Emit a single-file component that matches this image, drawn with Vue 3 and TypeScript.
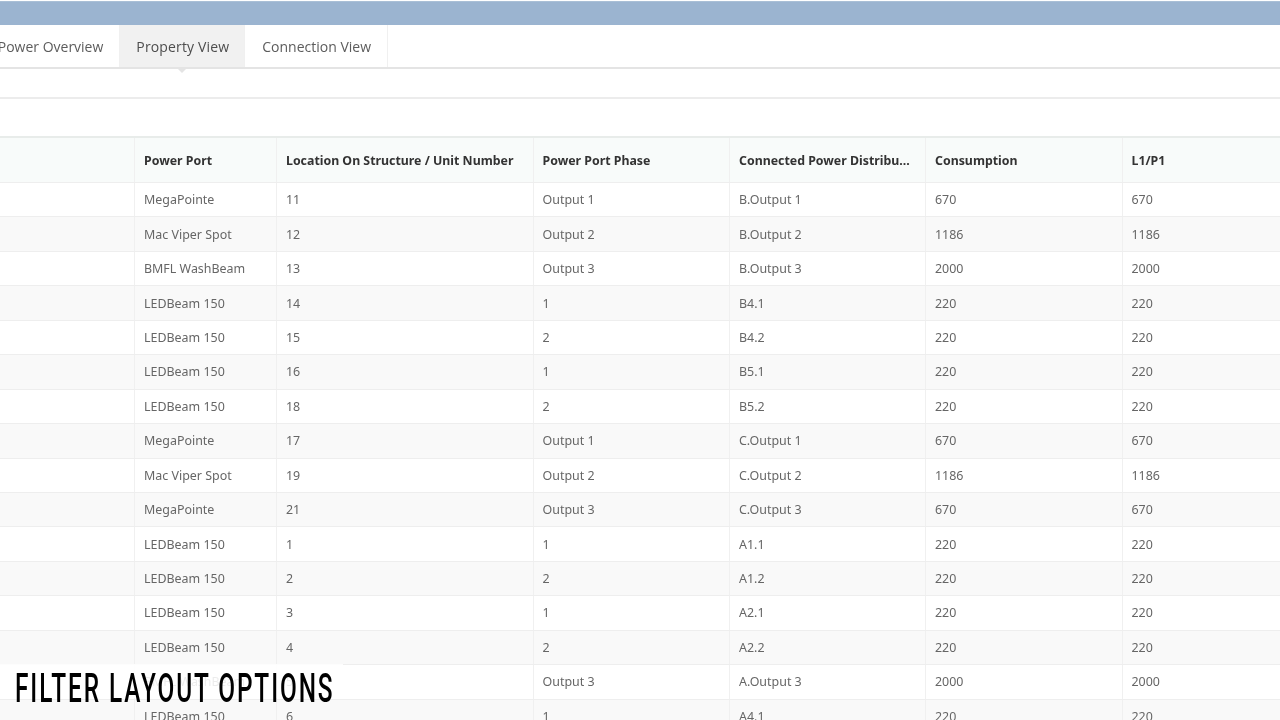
<script setup lang="ts">
interface Row {
  port: string
  unit: string
  phase: string
  dist: string
  power: string
}

const tabs = ['Power Overview', 'Property View', 'Connection View']

const headers = [
  '',
  'Power Port',
  'Location On Structure / Unit Number',
  'Power Port Phase',
  'Connected Power Distribu...',
  'Consumption',
  'L1/P1',
]

const rows: Row[] = [
  { port: 'MegaPointe', unit: '11', phase: 'Output 1', dist: 'B.Output 1', power: '670' },
  { port: 'Mac Viper Spot', unit: '12', phase: 'Output 2', dist: 'B.Output 2', power: '1186' },
  { port: 'BMFL WashBeam', unit: '13', phase: 'Output 3', dist: 'B.Output 3', power: '2000' },
  { port: 'LEDBeam 150', unit: '14', phase: '1', dist: 'B4.1', power: '220' },
  { port: 'LEDBeam 150', unit: '15', phase: '2', dist: 'B4.2', power: '220' },
  { port: 'LEDBeam 150', unit: '16', phase: '1', dist: 'B5.1', power: '220' },
  { port: 'LEDBeam 150', unit: '18', phase: '2', dist: 'B5.2', power: '220' },
  { port: 'MegaPointe', unit: '17', phase: 'Output 1', dist: 'C.Output 1', power: '670' },
  { port: 'Mac Viper Spot', unit: '19', phase: 'Output 2', dist: 'C.Output 2', power: '1186' },
  { port: 'MegaPointe', unit: '21', phase: 'Output 3', dist: 'C.Output 3', power: '670' },
  { port: 'LEDBeam 150', unit: '1', phase: '1', dist: 'A1.1', power: '220' },
  { port: 'LEDBeam 150', unit: '2', phase: '2', dist: 'A1.2', power: '220' },
  { port: 'LEDBeam 150', unit: '3', phase: '1', dist: 'A2.1', power: '220' },
  { port: 'LEDBeam 150', unit: '4', phase: '2', dist: 'A2.2', power: '220' },
  { port: 'BMFL WashBeam', unit: '5', phase: 'Output 3', dist: 'A.Output 3', power: '2000' },
  { port: 'LEDBeam 150', unit: '6', phase: '1', dist: 'A4.1', power: '220' },
]
</script>

<template>
  <div class="page">
    <div class="topbar" />

    <div class="tabbar">
      <div class="tabs">
        <div
          v-for="tab in tabs"
          :key="tab"
          class="tab"
          :class="{ active: tab === 'Property View' }"
        >
          {{ tab }}
        </div>
      </div>
    </div>

    <div class="filter-row" />
    <div class="spacer-row" />

    <div class="grid">
      <div class="row head">
        <div v-for="(h, i) in headers" :key="i" class="cell">{{ h }}</div>
      </div>
      <div v-for="(r, i) in rows" :key="i" class="row body-row">
        <div class="cell" />
        <div class="cell">{{ r.port }}</div>
        <div class="cell">{{ r.unit }}</div>
        <div class="cell">{{ r.phase }}</div>
        <div class="cell">{{ r.dist }}</div>
        <div class="cell">{{ r.power }}</div>
        <div class="cell">{{ r.power }}</div>
      </div>
    </div>

    <div class="caption">
      <span>FILTER LAYOUT OPTIONS</span>
    </div>
  </div>
</template>

<style>
html,
body {
  margin: 0;
  overflow: hidden;
  background: #fff;
}
</style>

<style scoped>
.page {
  position: relative;
  width: 1280px;
  height: 720px;
  overflow: hidden;
  background: #fff;
  font-family: 'Noto Sans', 'Open Sans', sans-serif;
  color: #666;
  filter: blur(0.35px);
}

.topbar {
  height: 24px;
  margin-top: 1px;
  background: #9bb4d0;
  border-top: 1px solid #a9bfd6;
  box-sizing: border-box;
}

.tabbar {
  height: 44px;
  box-sizing: border-box;
  border-bottom: 2px solid #e4e4e4;
}

.tabs {
  display: flex;
  justify-content: flex-end;
  width: 388px;
  height: 42px;
}

.tab {
  position: relative;
  flex: none;
  display: flex;
  align-items: center;
  height: 100%;
  padding: 1px 16px 0 17px;
  border-right: 1px solid #f0f0f0;
  box-sizing: border-box;
  font-family: 'Open Sans', 'Noto Sans', sans-serif;
  font-size: 14px;
  color: #5c5c5c;
  white-space: nowrap;
}

.tab.active {
  padding: 1px 15px 0 16px;
  letter-spacing: 0.15px;
  background: #f1f1f1;
  color: #4d4d4d;
}

.tab.active::after {
  content: '';
  position: absolute;
  left: 50%;
  bottom: -6px;
  margin-left: -5px;
  border-left: 5px solid transparent;
  border-right: 5px solid transparent;
  border-top: 5px solid #e4e4e4;
}

.filter-row {
  height: 30px;
  box-sizing: border-box;
  border-bottom: 2px solid #ececec;
}

.spacer-row {
  height: 39px;
  border-bottom: 2px solid #e8ecea;
  box-sizing: border-box;
}

.row {
  display: grid;
  grid-template-columns: 135px 142px 256.5px 196.5px 196px 196.5px 1fr;
  box-sizing: border-box;
}

.cell {
  display: flex;
  align-items: center;
  padding-left: 9px;
  border-right: 1px solid #f0f0f0;
  box-sizing: border-box;
  font-size: 12.45px;
  white-space: nowrap;
  overflow: hidden;
}

.cell:last-child {
  border-right: none;
}

.head {
  height: 45px;
  background: #f8fbfa;
  border-bottom: 1px solid #eeeeee;
}

.head .cell {
  font-weight: 700;
  font-size: 12.35px;
  color: #333;
}

.body-row {
  height: 34.44px;
  border-bottom: 1px solid #eeeeee;
}

.body-row:nth-child(odd) {
  background: #f9f9f9;
}

.caption {
  position: absolute;
  left: 0;
  top: 664px;
  width: 343px;
  height: 34px;
  background: rgba(255, 255, 255, 0.88);
}

.caption span {
  display: block;
  padding-left: 15px;
  font-family: 'Roboto', 'Liberation Sans', sans-serif;
  font-size: 41px;
  font-weight: 500;
  line-height: 48px;
  height: 34px;
  letter-spacing: 3.2px;
  color: #000;
  white-space: nowrap;
  transform: scaleX(0.595);
  transform-origin: 15px 50%;
}
</style>
